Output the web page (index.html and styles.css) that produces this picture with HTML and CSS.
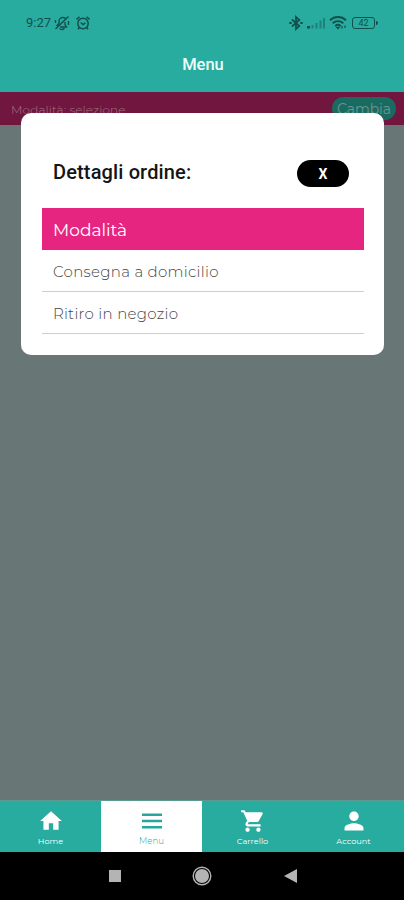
FILE: index.html
```
<!DOCTYPE html>
<html lang="it">
<head>
<meta charset="utf-8">
<meta name="viewport" content="width=device-width, initial-scale=1">
<title>Menu</title>
<link rel="stylesheet" href="styles.css">
</head>
<body>
<div class="phone">
  <header class="header">
    <div class="status">
      <div class="status-left">
        <span class="time">9:27</span>
        <svg class="bell" width="16" height="16" viewBox="0 0 16 16" fill="none" stroke="currentColor" stroke-width="1.4"><path d="M2.500 11l2.500-2.500V6.500C5 4 7 2.500 9 2.500c1.500 0 2.400.6 3 1.500M6 12h6.500L11 9.500V7M5.500 13.500c1.500 1.400 3.500 1.300 5-.3M14.500 1.500L1.500 14M14.500 6v4M1.500 5v3"/></svg>
        <svg class="alarm" width="16" height="16" viewBox="0 0 16 16" fill="none" stroke="currentColor" stroke-width="1.5"><circle cx="8" cy="8.500" r="5.200"/><path d="M1.500 4.300L4.500 1.800M14.500 4.300l-3-2.500M5.700 7.500L8 9.500l2.500-1.700M4.300 12.500L3 14.200M11.700 12.500l1.300 1.700"/></svg>
      </div>
      <div class="status-right">
        <svg width="14" height="16" viewBox="0 0 14 16" fill="none" stroke="currentColor" stroke-width="1.800"><path d="M3 4.500l7.300 6.600L7 14V2l3.300 2.900L3 11.500M.3 8h2.400M11.300 8h2.400"/></svg>
        <svg class="signal" width="19" height="14" viewBox="0 0 19 14" fill="currentColor"><path d="M0 10h3v2.500H0z"/><path opacity=".45" d="M4.500 9h2v3.500h-2zM8.500 7h2v5.500h-2zM12.500 4.500h2v8h-2zM16 2h2v10.500h-2z"/></svg>
        <svg class="wifi" width="18" height="15" viewBox="0 0 18 15" fill="none" stroke="currentColor" stroke-width="1.900"><path d="M1 5.200c4.500-4.200 11.500-4.200 16 0M3.700 8.200c3-2.800 7.600-2.800 10.600 0M6.300 11c1.600-1.400 3.800-1.400 5.400 0"/><path d="M7.800 12.300h2.400L9 13.700zM13 11v2.500M16 10.500V13" stroke-width="1.200"/></svg>
        <span class="battery">42</span>
      </div>
    </div>
    <h1 class="title">Menu</h1>
  </header>
  <section class="mode">
    <span class="mode-text">Modalità: selezione</span>
    <span class="change">Cambia</span>
  </section>
  <main class="content"></main>
  <nav class="tabs">
    <div class="tab">
      <svg width="26" height="26" viewBox="0 0 24 24" fill="currentColor"><path d="M10 20v-6h4v6h5v-8h3L12 3 2 12h3v8z"/></svg>
      <span class="home">Home</span>
    </div>
    <div class="tab active">
      <svg width="26" height="26" viewBox="0 0 24 24" fill="currentColor"><path d="M2.800 5h18.400v2.400H2.800zM2.800 10.800h18.400v2.400H2.800zM2.800 16.600h18.400V19H2.800z"/></svg>
      <span class="menu">Menu</span>
    </div>
    <div class="tab">
      <svg width="26" height="26" viewBox="0 0 24 24" fill="currentColor"><path d="M7 18c-1.100 0-1.990.9-1.990 2S5.900 22 7 22s2-.9 2-2-.9-2-2-2zM1 2v2h2l3.600 7.590-1.350 2.450c-.16.280-.25.610-.25.960 0 1.100.9 2 2 2h12v-2H7.420c-.14 0-.25-.11-.25-.25l.03-.12.900-1.630h7.450c.75 0 1.410-.41 1.750-1.030l3.580-6.490A1 1 0 0 0 20 4H5.210l-.94-2zM17 18c-1.100 0-1.990.9-1.990 2s.89 2 1.990 2 2-.9 2-2-.9-2-2-2z"/></svg>
      <span class="cart">Carrello</span>
    </div>
    <div class="tab">
      <svg width="28" height="28" viewBox="1 1 22 22" fill="currentColor"><path d="M12 12c2.210 0 4-1.790 4-4s-1.790-4-4-4-4 1.790-4 4 1.790 4 4 4zm0 2c-2.670 0-8 1.340-8 4v2h16v-2c0-2.660-5.330-4-8-4z"/></svg>
      <span class="account">Account</span>
    </div>
  </nav>
  <footer class="system">
    <svg width="12" height="12" viewBox="0 0 12 12"><path fill="#b4b4b4" d="M0 0h12v12H0z"/></svg>
    <svg width="20" height="20" viewBox="0 0 20 20"><circle cx="10" cy="10" r="8.800" fill="none" stroke="#b4b4b4" stroke-width="1.400"/><circle cx="10" cy="10" r="7" fill="#b4b4b4"/></svg>
    <svg width="13" height="14" viewBox="0 0 13 14"><path fill="#b4b4b4" d="M13 0v14L0 7z"/></svg>
  </footer>
  <div class="modal" role="dialog" aria-label="Dettagli ordine">
    <div class="modal-head">
      <h2 class="heading">Dettagli ordine:</h2>
      <button class="close">X</button>
    </div>
    <div class="list-title"><span>Modalità</span></div>
    <div class="option"><span class="delivery">Consegna a domicilio</span></div>
    <div class="option"><span class="pickup">Ritiro in negozio</span></div>
  </div>
</div>
</body>
</html>
```
FILE: styles.css
```
* { box-sizing: border-box; }
body { margin: 0; font-family: Montserrat, Inter, sans-serif; }
h1, h2 { margin: 0; }
svg { display: block; flex: none; }
span { white-space: nowrap; }
.phone { position: relative; width: 404px; height: 900px; display: flex; flex-direction: column; overflow: hidden; background: #687676; }
.header { height: 92px; background: #28aca0; }
.status { height: 45px; padding: 0 29px 0 26px; display: flex; align-items: center; justify-content: space-between; color: #12504c; }
.status-left, .status-right { display: flex; align-items: center; }
.time { font: 400 13px/16px Roboto, sans-serif; width: 28px; letter-spacing: 0; }
.alarm { margin-left: 5px; }
.signal { margin-left: 4px; }
.wifi { margin-left: 3px; }
.battery { position: relative; width: 23px; height: 12px; margin-left: 5px; border: 1.500px solid #12504c; border-radius: 3px; font: 400 9px/10px Roboto, sans-serif; text-align: center; }
.battery::after { content: ""; position: absolute; right: -4px; top: 3px; width: 2px; height: 4px; background: #12504c; border-radius: 0 2px 2px 0; }
.title { text-align: center; color: #eefffc; font: 500 16.5px/24px Roboto, sans-serif; padding: 8px 0 0 2px; }
.mode { height: 33px; display: flex; justify-content: space-between; align-items: flex-start; padding: 5px 8px 0 11px; background: #70163f; color: #a07687; }
.mode-text { font-size: 12px; line-height: 25px; font-weight: 300; letter-spacing: .13px; }
.change { width: 64px; height: 23px; border-radius: 12px; background: #196b62; color: #6b9691; font-size: 14px; line-height: 25px; text-align: center; letter-spacing: -.1px; }
.content { flex: 1; }
.tabs { height: 52px; display: grid; grid-template-columns: repeat(4, 1fr); background: #28aca0; border-top: 1px solid #5b9993; }
.tab { display: flex; flex-direction: column; align-items: center; justify-content: space-between; padding: 7px 0 6px; color: #fff; font-size: 8.2px; line-height: 10px; }
.tab svg { height: 26px; }
.tab.active { background: #fff; color: #28a69a; }
.tab.active .menu { font-weight: 300; font-size: 8.6px; }
.system { height: 48px; display: flex; align-items: center; justify-content: center; gap: 71.500px; background: #000; padding-left: 1px; }
.modal { position: absolute; left: 21px; top: 113px; width: 363px; height: 242px; padding: 37px 20px 0 21px; border-radius: 10px; background: #fff; }
.modal-head { height: 58px; padding: 10px 15px 0 11px; display: flex; justify-content: space-between; }
.heading { font: 500 20px/24px Roboto, sans-serif; color: #151515; white-space: nowrap; letter-spacing: .14px; }
.close { width: 52px; height: 27px; padding: 1px 0 0; border: 0; border-radius: 14px; background: #000; color: #fff; font: 700 14px/26px Roboto, sans-serif; }
.list-title { height: 42px; padding-left: 11px; background: #e62581; color: #fff; font-size: 17px; line-height: 45px; letter-spacing: 0; }
.option { height: 42px; padding-left: 11px; border-bottom: 1px solid #cfcfcf; color: #444; font-size: 15px; line-height: 44px; font-weight: 300; letter-spacing: .3px; }
```
